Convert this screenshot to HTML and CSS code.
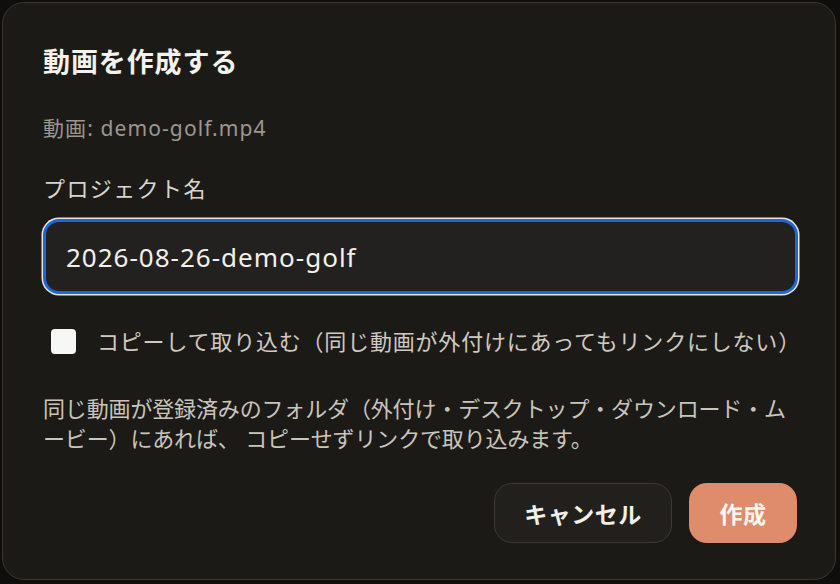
FILE: index.html
```html
<!DOCTYPE html>
<html lang="ja">
<head>
<meta charset="utf-8">
<title>動画を作成する</title>
<link rel="stylesheet" href="styles.css">
</head>
<body>
<div class="dialog">
  <h1 class="title">動画を作成する</h1>
  <p class="source">動画: <span class="latin">demo-golf.mp4</span></p>
  <label class="field-label" for="project">プロジェクト名</label>
  <div class="input">2026-08-26-demo-golf</div>
  <div class="check-row">
    <span class="checkbox"></span>
    <span class="check-label">コピーして取り込む（同じ動画が外付けにあってもリンクにしない）</span>
  </div>
  <p class="help">同じ動画が登録済みのフォルダ（外付け・デスクトップ・ダウンロード・ム<br>ービー）にあれば、 コピーせずリンクで取り込みます。</p>
  <div class="actions">
    <button class="btn btn-cancel">キャンセル</button>
    <button class="btn btn-primary">作成</button>
  </div>
</div>
</body>
</html>
```

FILE: styles.css
```css
* { box-sizing: border-box; }
html, body {
  margin: 0;
  padding: 0;
  background: #0f0e0d;
  width: 840px;
  height: 584px;
  overflow: hidden;
}
body {
  padding: 2px 4px 4px 2px;
  font-family: "Noto Sans", "Noto Sans CJK JP", sans-serif;
}
.dialog {
  width: 834px;
  height: 578px;
  background: #1c1a17;
  border: 1px solid #3a3731;
  border-radius: 22px;
  padding: 41px 37px 0 40px;
  display: flex;
  flex-direction: column;
}
.title {
  margin: 0;
  font-size: 27px;
  line-height: 36px;
  font-weight: 700;
  color: #f4f2ec;
  letter-spacing: 0.9px;
}
.source {
  margin: 34px 0 0;
  font-size: 21px;
  line-height: 28px;
  color: #9b978e;
  letter-spacing: 1.1px;
}
.field-label {
  margin-top: 31px;
  font-size: 22px;
  line-height: 30px;
  color: #d9d5cd;
  letter-spacing: 1.4px;
}
.input {
  margin-top: 16px;
  height: 75px;
  border: 3px solid #1b68dc;
  border-radius: 16px;
  box-shadow: 0 0 0 1.5px #e6e4de;
  background: #232120;
  color: #f2f0ea;
  font-size: 26px;
  letter-spacing: 1px;
  padding-left: 20px;
  display: flex;
  align-items: center;
}
.check-row {
  margin-top: 32px;
  height: 30px;
  display: flex;
  align-items: center;
  padding-left: 8px;
  gap: 21px;
}
.checkbox {
  width: 25px;
  height: 25px;
  border-radius: 4px;
  background: #f7f7f5;
  flex: none;
}
.check-label {
  font-size: 22px;
  line-height: 30px;
  color: #cfcac1;
  letter-spacing: 0.8px;
  white-space: nowrap;
}
.help {
  margin: 37px 0 0;
  font-size: 22px;
  line-height: 30px;
  color: #c9c5bc;
  letter-spacing: -0.15px;
  white-space: nowrap;
}
.actions {
  margin-top: 30px;
  display: flex;
  justify-content: flex-end;
  gap: 17px;
  padding-right: 1px;
}
.btn {
  height: 60px;
  border-radius: 18px;
  font-family: inherit;
  font-size: 23px;
  font-weight: 700;
  letter-spacing: 0.5px;
  cursor: pointer;
}
.btn-cancel {
  width: 178px;
  background: #22201d;
  border: 1px solid #3d3a34;
  color: #f2efe9;
}
.btn-primary {
  width: 108px;
  background: #df8c6d;
  border: none;
  color: #fff6f0;
}
```
